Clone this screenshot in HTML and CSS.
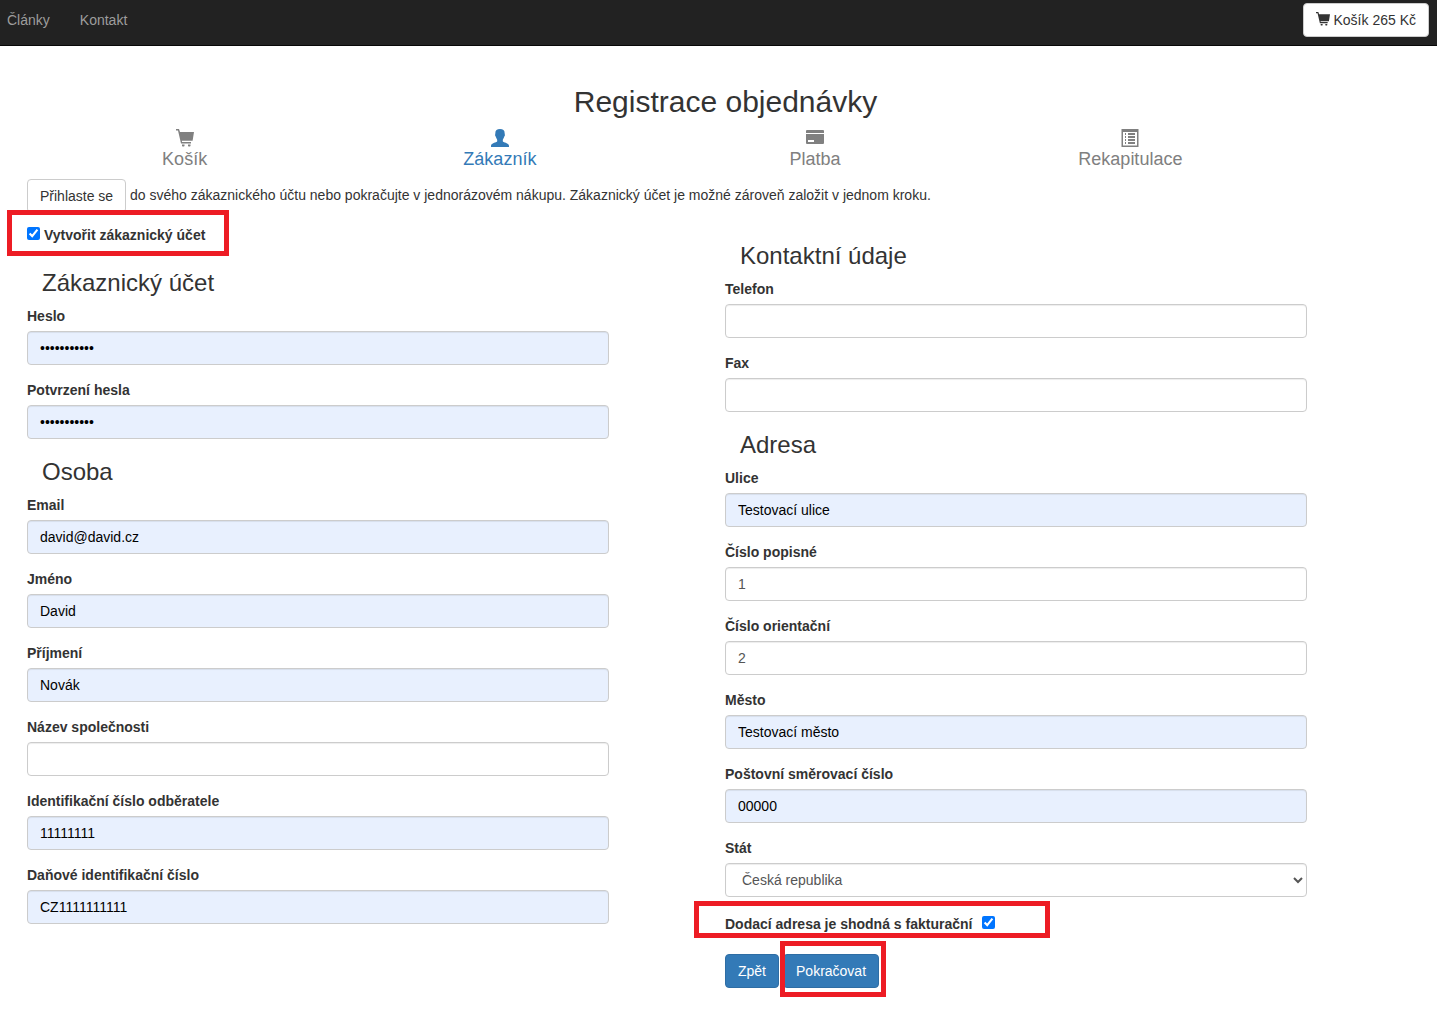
FILE: index.html
```html
<!DOCTYPE html>
<html lang="cs">
<head>
<meta charset="utf-8">
<meta name="viewport" content="width=device-width, initial-scale=1">
<title>Registrace objednávky</title>
<link rel="stylesheet" href="styles.css">
</head>
<body>
<svg class="sprite" aria-hidden="true">
  <symbol id="icon-cart" viewBox="0 0 18 18">
    <path d="M0 0H3L4 3H18L16.6 11.800H5.800L6.100 13H15V14.400H5L2 1.500H0Z"/>
    <path d="M6 15.500H8.500V17Q7.200 18 6 17ZM12 15.500H14.500V17Q13.200 18 12 17Z"/>
  </symbol>
  <symbol id="icon-user" viewBox="0 0 18 18">
    <path d="M9 0C12 0 13.700 1.200 13.700 4.400C13.700 5.400 14 5.300 13.900 6.300C13.700 7.400 13.200 7.400 13 8.200C12.600 9.600 11.800 10.200 11.800 11V12.200C11.800 13.400 18 13.800 18 16.800V18H0V16.800C0 13.800 6.200 13.400 6.200 12.200V11C6.200 10.200 5.400 9.600 5 8.200C4.800 7.400 4.300 7.400 4.100 6.300C4 5.300 4.300 5.400 4.300 4.400C4.300 1.200 6 0 9 0Z"/>
  </symbol>
  <symbol id="icon-card" viewBox="0 0 18 18">
    <path d="M1 1H17Q18 1 18 2V4H0V2Q0 1 1 1Z"/>
    <path fill-rule="evenodd" d="M0 5H18V14Q18 15 17 15H1Q0 15 0 14ZM2 11V13H8V11Z"/>
  </symbol>
  <symbol id="icon-list" viewBox="0 0 18 18">
    <path fill-rule="evenodd" d="M0.500 0H17.500V18H0.500ZM2 3V16.500H16V3Z"/>
    <path d="M4 4H5V6H4ZM7 4H14V6H7ZM4 7H5V9H4ZM7 7H14V9H7ZM4 10H5V12H4ZM7 10H14V12H7ZM4 13H5V15H4ZM7 13H14V15H7Z"/>
  </symbol>
</svg>

<header class="navbar">
  <nav class="nav-links">
    <a href="#">Články</a>
    <a href="#">Kontakt</a>
  </nav>
  <button type="button" class="btn btn-default"><svg class="icon-small" aria-hidden="true"><use href="#icon-cart"/></svg>Košík 265 Kč</button>
</header>

<main class="page">
  <h1>Registrace objednávky</h1>
  <ol class="steps">
    <li><svg class="icon" aria-hidden="true"><use href="#icon-cart"/></svg>Košík</li>
    <li class="active" aria-current="step"><svg class="icon" aria-hidden="true"><use href="#icon-user"/></svg>Zákazník</li>
    <li><svg class="icon" aria-hidden="true"><use href="#icon-card"/></svg>Platba</li>
    <li><svg class="icon" aria-hidden="true"><use href="#icon-list"/></svg>Rekapitulace</li>
  </ol>
  <p class="intro"><a class="btn btn-default" href="#">Přihlaste se</a> do svého zákaznického účtu nebo pokračujte v jednorázovém nákupu. Zákaznický účet je možné zároveň založit v jednom kroku.</p>

  <form class="columns">
    <div class="column">
      <div class="check-row marked create-account">
        <input type="checkbox" id="create" checked>
        <label for="create">Vytvořit zákaznický účet</label>
      </div>
      <section>
        <h2>Zákaznický účet</h2>
        <div class="field"><label for="pw">Heslo</label><input class="filled" type="password" id="pw" value="testovaci12"></div>
        <div class="field"><label for="pw2">Potvrzení hesla</label><input class="filled" type="password" id="pw2" value="testovaci12"></div>
      </section>
      <section>
        <h2>Osoba</h2>
        <div class="field"><label for="email">Email</label><input class="filled" type="email" id="email" value="david@david.cz"></div>
        <div class="field"><label for="first">Jméno</label><input class="filled" type="text" id="first" value="David"></div>
        <div class="field"><label for="last">Příjmení</label><input class="filled" type="text" id="last" value="Novák"></div>
        <div class="field"><label for="company">Název společnosti</label><input type="text" id="company"></div>
        <div class="field"><label for="ico">Identifikační číslo odběratele</label><input class="filled" type="text" id="ico" value="11111111"></div>
        <div class="field"><label for="dic">Daňové identifikační číslo</label><input class="filled" type="text" id="dic" value="CZ1111111111"></div>
      </section>
    </div>

    <div class="column">
      <section>
        <h2>Kontaktní údaje</h2>
        <div class="field"><label for="tel">Telefon</label><input type="tel" id="tel"></div>
        <div class="field"><label for="fax">Fax</label><input type="tel" id="fax"></div>
      </section>
      <section>
        <h2>Adresa</h2>
        <div class="field"><label for="street">Ulice</label><input class="filled" type="text" id="street" value="Testovací ulice"></div>
        <div class="field"><label for="house">Číslo popisné</label><input type="text" id="house" value="1"></div>
        <div class="field"><label for="orient">Číslo orientační</label><input type="text" id="orient" value="2"></div>
        <div class="field"><label for="city">Město</label><input class="filled" type="text" id="city" value="Testovací město"></div>
        <div class="field"><label for="zip">Poštovní směrovací číslo</label><input class="filled" type="text" id="zip" value="00000"></div>
        <div class="field"><label for="country">Stát</label><select id="country"><option>Česká republika</option></select></div>
      </section>
      <div class="check-row marked same-address">
        <label for="same">Dodací adresa je shodná s fakturační</label>
        <input type="checkbox" id="same" checked>
      </div>
      <div class="actions">
        <button type="button" class="btn btn-primary">Zpět</button>
        <div class="marked continue"><button type="submit" class="btn btn-primary">Pokračovat</button></div>
      </div>
    </div>
  </form>
</main>
</body>
</html>
```
FILE: styles.css
```css
*,
*::before,
*::after {
  box-sizing: border-box;
}

body {
  margin: 0;
  background: #fff;
  color: #333;
  font-family: "Liberation Sans", Arial, sans-serif;
  font-size: 14px;
  line-height: 20px;
}

.sprite {
  display: none;
}

.navbar {
  display: flex;
  justify-content: space-between;
  align-items: flex-start;
  min-height: 46px;
  padding: 3px 8px 0 7px;
  background: #222;
  border-bottom: 1px solid #080808;
}

.nav-links {
  display: flex;
  gap: 30px;
  padding-top: 7px;
}

.nav-links a {
  color: #9d9d9d;
  text-decoration: none;
}

.btn {
  display: inline-block;
  padding: 6px 12px;
  border: 1px solid;
  border-radius: 4px;
  font: inherit;
  line-height: 20px;
  white-space: nowrap;
  text-decoration: none;
  cursor: pointer;
}

.btn-default {
  color: #333;
  background: #fff;
  border-color: #ccc;
}

.btn-primary {
  color: #fff;
  background: #337ab7;
  border-color: #2e6da4;
}

.icon {
  width: 18px;
  height: 18px;
  fill: currentColor;
}

.icon-small {
  width: 14px;
  height: 14px;
  margin-right: 4px;
  vertical-align: -1px;
  fill: currentColor;
}

.page {
  padding: 39px 13px 20px 27px;
}

h1 {
  margin: 0 0 10px;
  font-size: 30px;
  font-weight: normal;
  line-height: 34px;
  text-align: center;
}

.steps {
  display: grid;
  grid-template-columns: repeat(4, 1fr);
  margin: 0 136px 0 0;
  padding: 0;
  list-style: none;
  color: #808080;
  font-size: 18px;
}

.steps li {
  display: flex;
  flex-direction: column;
  align-items: center;
  gap: 2px;
}

.steps .active {
  color: #337ab7;
}

.intro {
  margin: 10px 0;
}

.intro .btn {
  vertical-align: middle;
}

.columns {
  display: grid;
  grid-template-columns: 1fr 1fr;
  column-gap: 116px;
  margin-right: 117px;
}

h2 {
  margin: 20px 0 10px;
  padding-left: 15px;
  font-size: 24px;
  font-weight: normal;
  line-height: 26px;
}

.field {
  margin-bottom: 15px;
}

label {
  font-weight: bold;
}

.field label {
  display: block;
  margin-bottom: 5px;
}

.field input,
.field select {
  display: block;
  width: 100%;
  height: 34px;
  padding: 6px 12px;
  border: 1px solid #ccc;
  border-radius: 4px;
  background: #fff;
  box-shadow: inset 0 1px 1px rgba(0, 0, 0, 0.075);
  color: #555;
  font: inherit;
}

.field .filled {
  background: #e8f0fe;
  color: #000;
}

.check-row {
  display: flex;
  align-items: center;
}

.check-row input {
  width: 13px;
  height: 13px;
  margin: 0 0 3px;
}

/* Red frames that call out the steps of the guide */
.marked {
  position: relative;
}

.marked::after {
  content: "";
  position: absolute;
  border: 5px solid #ed1c24;
  pointer-events: none;
}

.create-account {
  gap: 4px;
  margin: 2px 0 25px;
}

.create-account::after {
  top: -15px;
  left: -20px;
  width: 222px;
  height: 46px;
}

.same-address {
  gap: 10px;
  margin: 17px 0 20px;
}

.same-address::after {
  top: -13px;
  left: -31px;
  width: 356px;
  height: 37px;
}

.actions {
  display: flex;
  gap: 4px;
}

.continue::after {
  top: -13px;
  left: -3px;
  width: 106px;
  height: 56px;
}
```
